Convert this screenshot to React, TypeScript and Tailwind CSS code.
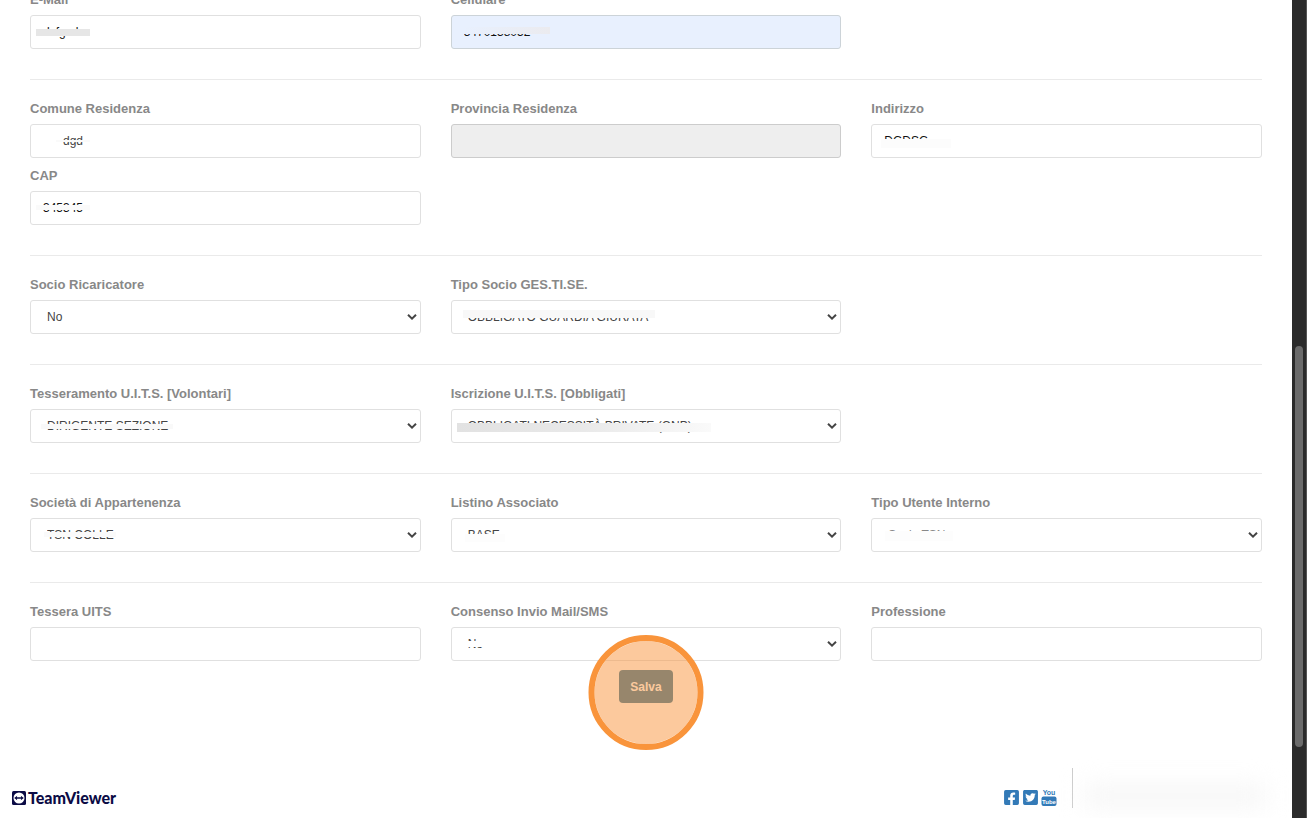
import { useId, type ReactNode } from "react";
import clsx from "clsx";
import { FaFacebookSquare, FaTwitterSquare } from "react-icons/fa";

const box = "block h-[34px] w-full rounded-[3px] border text-xs outline-none";

function Field({ id, label, mask, children }: { id: string; label: string; mask?: string; children: ReactNode }) {
  return (
    <div>
      <label htmlFor={id} className="mb-[7px] block text-[13px] leading-4 font-bold text-[#888]">
        {label}
      </label>
      <div className="relative">
        {children}
        {mask && <span aria-hidden="true" className={clsx("pointer-events-none absolute", mask)} />}
      </div>
    </div>
  );
}

type TextFieldProps = { label: string; value?: string; mask?: string; className?: string; disabled?: boolean };

function TextField({ label, value, mask, className = "border-[#e0e0e0] bg-white pl-3 text-[#111]", disabled }: TextFieldProps) {
  const id = useId();
  return (
    <Field id={id} label={label} mask={mask}>
      <input id={id} type="text" defaultValue={value} disabled={disabled} className={clsx(box, className)} />
    </Field>
  );
}

type SelectFieldProps = { label: string; value: string; mask?: string; color?: string };

function SelectField({ label, value, mask, color = "text-[#444]" }: SelectFieldProps) {
  const id = useId();
  return (
    <Field id={id} label={label} mask={mask}>
      <select id={id} className={clsx(box, color, "appearance-none border-[#e0e0e0] bg-white pr-8 pl-4")}>
        <option>{value}</option>
      </select>
      <svg
        viewBox="0 0 10 6"
        className="pointer-events-none absolute top-[14px] right-1 h-[6px] w-[10px]"
        fill="none"
        stroke="#444"
        strokeWidth="2"
      >
        <path d="M1 0.8 L5 4.6 L9 0.8" />
      </svg>
    </Field>
  );
}

function Row({ children }: { children: ReactNode }) {
  return <div className="grid grid-cols-3 gap-x-[30px] gap-y-[10px]">{children}</div>;
}

function Divider() {
  return <hr className="mt-[30px] mb-[21px] border-t border-[#eaeaea]" />;
}

function TeamViewerLogo() {
  return (
    <a href="#teamviewer" className="flex items-center gap-[2px] text-[#0b0b45]">
      <svg viewBox="0 0 14 14" className="size-[14px]">
        <rect width="14" height="14" rx="1.5" fill="#0b0b45" />
        <circle cx="7" cy="7" r="5.5" fill="#fff" />
        <path d="M2.2 7 L5.2 4.7 L4.9 6.3 H9.1 L8.8 4.7 L11.8 7 L8.8 9.3 L9.1 7.7 H4.9 L5.2 9.3 Z" fill="#0b0b45" />
      </svg>
      <span className="font-[Lato] text-base leading-5 font-black">TeamViewer</span>
    </a>
  );
}

function YouTubeIcon() {
  return (
    <svg
      viewBox="0 0 16 20"
      className="h-5 w-4"
      fontFamily="'Liberation Sans Narrow', 'Liberation Sans', sans-serif"
      fontWeight="bold"
      textAnchor="middle"
    >
      <text x="8" y="8" fontSize="7" fill="#337ab7">You</text>
      <rect x="0.5" y="9.5" width="15" height="9.5" rx="2" fill="#337ab7" />
      <text x="8" y="16.5" fontSize="6" fill="#fff">Tube</text>
    </svg>
  );
}

export default function App() {
  return (
    <div className="flex h-screen overflow-hidden bg-white font-['Liberation_Sans',Arial,sans-serif]">
      <div className="min-w-0 flex-1">
        <form className="-mt-2 px-[30px]" onSubmit={(e) => e.preventDefault()}>
          <Row>
            <TextField label="E-Mail" value="dsfgsd" mask="left-[6px] top-[14px] h-[7px] w-[54px] bg-[#e6e6e6]" />
            <TextField
              label="Cellulare"
              value="3470138052"
              className="border-[#ccd3d8] bg-[#e8f0fe] pl-3 text-[#111]"
              mask="left-3 top-[12px] h-[7px] w-[87px] bg-linear-to-r from-[#e8f0fe] to-[#ebebef]"
            />
          </Row>
          <Divider />
          <Row>
            <TextField
              label="Comune Residenza"
              value="dgd"
              className="border-[#e0e0e0] bg-white pl-8 text-[#444]"
              mask="left-[26px] top-4 h-[2px] w-[34px] bg-[#fafafa]"
            />
            <TextField label="Provincia Residenza" disabled className="border-[#ccc] bg-[#eee]" />
            <TextField label="Indirizzo" value="DGDSG" mask="left-[10px] top-[15px] h-[9px] w-[70px] bg-[#fcfcfc]" />
            <TextField label="CAP" value="345345" mask="left-[6px] top-[14px] h-[5px] w-[54px] bg-[#fafafa]" />
          </Row>
          <Divider />
          <Row>
            <SelectField label="Socio Ricaricatore" value="No" />
            <SelectField
              label="Tipo Socio GES.TI.SE."
              value="OBBLIGATO GUARDIA GIURATA"
              mask="left-3 top-[10px] h-[8px] w-[192px] bg-[#f8f8f8]"
            />
          </Row>
          <Divider />
          <Row>
            <SelectField
              label="Tesseramento U.I.T.S. [Volontari]"
              value="DIRIGENTE SEZIONE"
              mask="left-[11px] top-[15px] h-[5px] w-[132px] bg-[#f9f9f9]"
            />
            <SelectField
              label="Iscrizione U.I.T.S. [Obbligati]"
              value="OBBLIGATI NECESSITÀ PRIVATE (ONP)"
              mask="left-[6px] top-[14px] h-[9px] w-[254px] bg-linear-to-r from-[#e2e2e2] via-[#e9e9e9] to-[#fafafa]"
            />
          </Row>
          <Divider />
          <Row>
            <SelectField
              label="Società di Appartenenza"
              value="TSN COLLE"
              mask="left-[14px] top-[14px] h-[5px] w-[72px] bg-[#fafafa]"
            />
            <SelectField label="Listino Associato" value="BASE" mask="left-[14px] top-[16px] h-[8px] w-[40px] bg-[#fdfdfd]" />
            <SelectField
              label="Tipo Utente Interno"
              value="Socio TSN"
              color="text-[#888]"
              mask="left-[14px] top-[13px] h-[10px] w-[68px] bg-[#fdfdfd]"
            />
          </Row>
          <Divider />
          <Row>
            <TextField label="Tessera UITS" />
            <SelectField label="Consenso Invio Mail/SMS" value="No" mask="left-[14px] top-[14px] h-[6px] w-6 bg-white" />
            <TextField label="Professione" />
          </Row>
          <div className="mt-[9px] flex justify-center">
            <div className="relative">
              <button type="submit" className="block h-[33px] w-[54px] rounded-[4px] bg-[#34799c] text-xs font-bold text-white">
                Salva
              </button>
              <span
                aria-hidden="true"
                className="pointer-events-none absolute -top-[35px] left-1/2 size-[115px] -translate-x-1/2 rounded-full border-6 border-[#f9943b] bg-[#fa933c]/50 bg-clip-padding"
              />
            </div>
          </div>
        </form>

        <footer className="mt-[65px] flex h-10 items-stretch justify-between pl-3">
          <div className="flex items-end">
            <TeamViewerLogo />
          </div>
          <div className="flex">
            <div className="flex items-center gap-[2px] pt-[18px] pr-[15px] text-[#337ab7]">
              <a href="#facebook" aria-label="Facebook"><FaFacebookSquare className="size-[17px]" /></a>
              <a href="#twitter" aria-label="Twitter"><FaTwitterSquare className="size-[17px]" /></a>
              <a href="#youtube" aria-label="YouTube"><YouTubeIcon /></a>
            </div>
            <div className="flex w-[220px] items-center border-l border-[#ccc] pt-4 pl-3">
              <div className="h-5 w-[180px] bg-[#f5f5f5] blur-md" />
            </div>
          </div>
        </footer>
      </div>

      <div className="flex w-[15px] flex-col items-center border-r border-[#555] bg-[#2b2b2b]">
        <div className="mt-[346px] h-[401px] w-2 rounded-full bg-[#6b6b6b]" />
      </div>
    </div>
  );
}
